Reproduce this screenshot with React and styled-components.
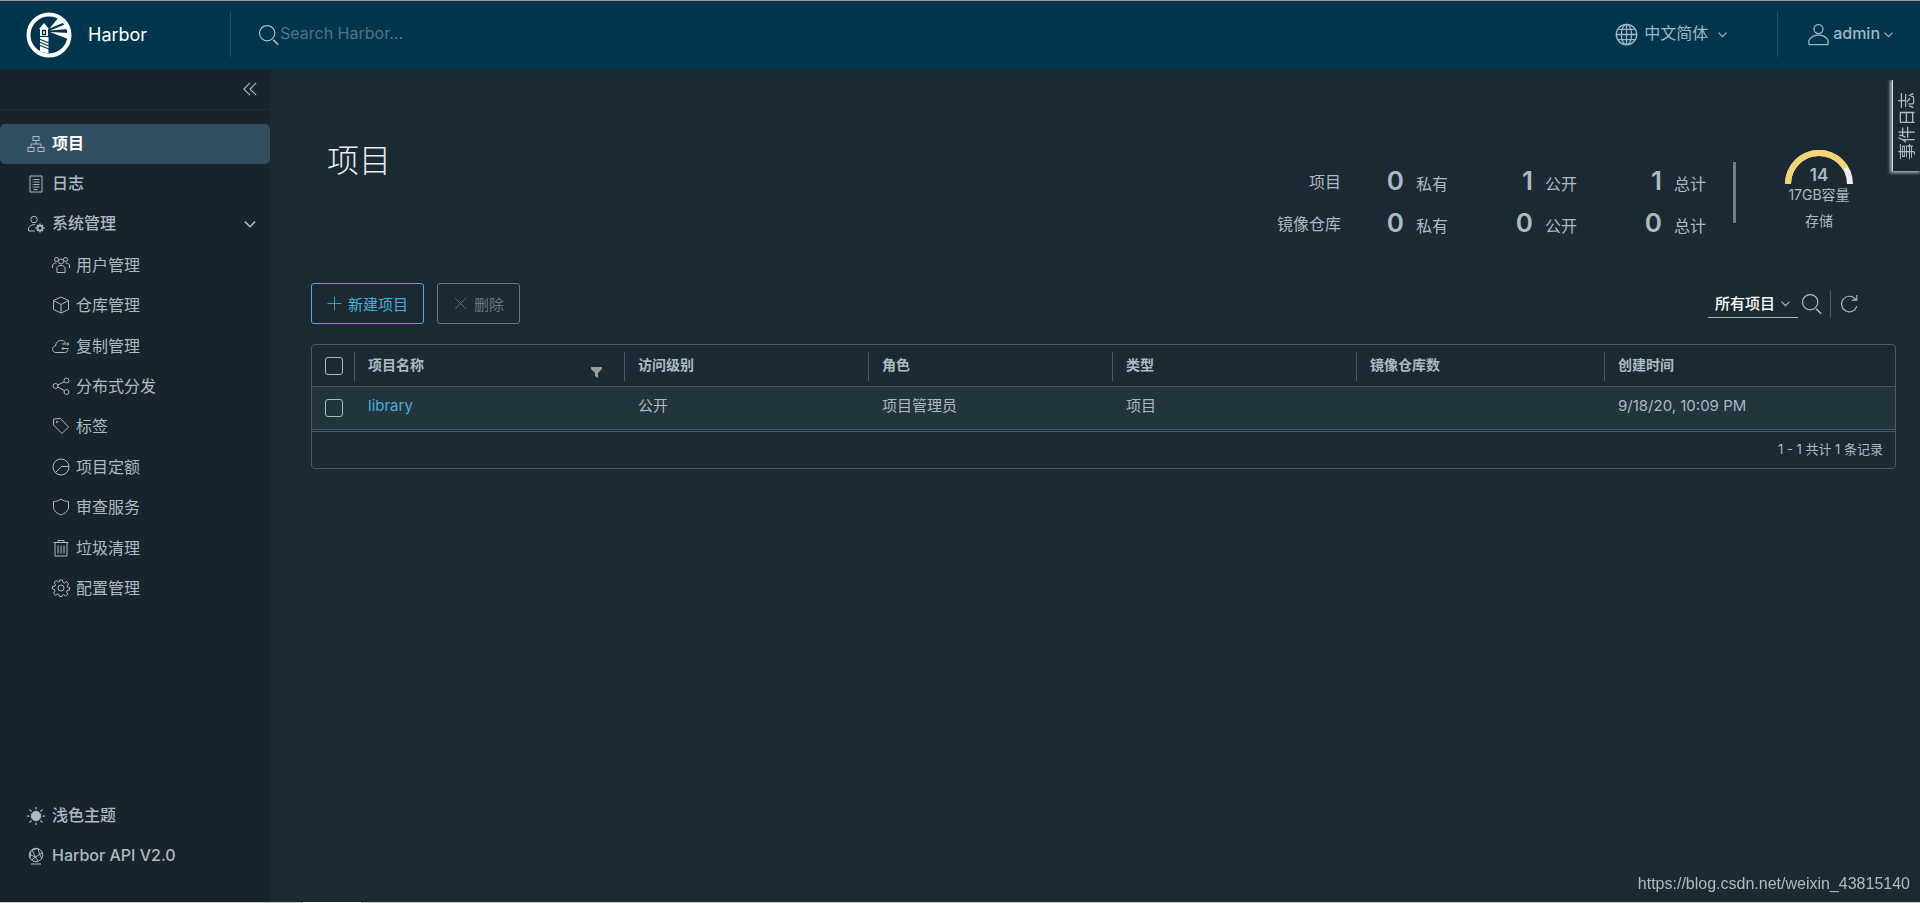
import React from "react";
import styled, { createGlobalStyle } from "styled-components";

const Global = createGlobalStyle`
  *, *::before, *::after { box-sizing: border-box; }
  body { margin: 0; background: #1b2a32; }
  body, button, input, select {
    font-family: Inter, "Noto Sans CJK SC", sans-serif;
  }
  button { cursor: pointer; }
  a { color: inherit; text-decoration: none; }
`;

const Page = styled.div`
  display: flex;
  flex-direction: column;
  min-height: 100vh;
  color: #acbac3;
  font-size: 16px;
  line-height: 24px;
  border-top: 1px solid #9a9c9c;
`;
const Header = styled.header`
  display: flex;
  align-items: center;
  height: 68px;
  padding-bottom: 1px;
  background: #00364d;
`;
const Brand = styled.a`
  display: flex;
  align-items: center;
  gap: 16px;
  width: 230px;
  padding-left: 26px;
  color: #fff;
  font-size: 18px;
`;
const Rule = styled.span`
  width: 1px;
  height: 45px;
  background: #24536a;
`;
const FilterRule = styled(Rule)`
  height: 28px;
  margin: 0 8px 0 7px;
  background: #495a67;
`;
const Search = styled.label`
  display: flex;
  align-items: center;
  flex: 1;
  padding-left: 27px;
`;
const SearchInput = styled.input`
  flex: 1;
  border: 0;
  outline: 0;
  padding: 0 0 3px;
  background: transparent;
  color: #fff;
  font-size: 16px;
  &::placeholder { color: #527385; opacity: 1; }
`;
const HeaderButton = styled.button`
  display: flex;
  align-items: center;
  gap: ${(p) => p.$gap}px;
  border: 0;
  padding: ${(p) => p.$pad};
  background: transparent;
  color: #a3b6c0;
  font-size: 16px;
  font-weight: ${(p) => p.$weight || 400};
  line-height: 24px;
`;
const ButtonText = styled.span`
  padding: 0 ${(p) => p.$after || 0}px 3px 0;
`;
const Body = styled.div`
  display: flex;
  flex: 1;
`;
const Side = styled.nav`
  display: flex;
  flex-direction: column;
  width: 270px;
  flex-shrink: 0;
  padding-bottom: 26px;
  background: #17242b;
`;
const Collapse = styled.button`
  display: flex;
  justify-content: flex-end;
  align-items: center;
  height: 41px;
  padding: 0 12px 0 0;
  border: 0;
  border-bottom: 1px solid #202e36;
  background: transparent;
  color: #acbac3;
  margin-bottom: 14px;
`;
const NavLink = styled.a`
  display: flex;
  align-items: center;
  gap: 7px;
  height: 40px;
  padding: 0 13px 0 27px;
  border-radius: 5px;
  font-weight: ${(p) => (p.$active ? 700 : 500)};
  color: ${(p) => (p.$active ? "#fff" : "#acbac3")};
  background: ${(p) => (p.$active ? "#324f62" : "transparent")};
  svg { color: #acbac3; }
`;
const NavText = styled.span`
  flex: 1;
  padding-bottom: 2px;
`;
const SubNav = styled.div`
  display: grid;
  height: 364px;
`;
const SubLink = styled.a`
  display: flex;
  align-items: center;
  gap: 6px;
  padding: 1px 0 0 52px;
`;
const SideBottom = styled.div`
  margin-top: auto;
`;
const Main = styled.main`
  flex: 1;
  min-width: 0;
  padding: 54px 24px 0 41px;
`;
const TitleRow = styled.div`
  display: flex;
  justify-content: space-between;
  padding: 0 42px 0 16px;
  height: 160px;
`;
const Title = styled.h1`
  margin: 14px 0 0;
  color: #e9edef;
  font-size: 32px;
  font-weight: 300;
  line-height: 48px;
`;
const Summary = styled.div`
  display: flex;
  align-items: flex-start;
`;
const Stats = styled.dl`
  display: grid;
  grid-template-columns: auto 107px 129px 129px;
  grid-auto-rows: 42px;
  margin: 38px 27px 0 0;
  text-align: right;
  dt { line-height: 42px; }
  dd { margin: 0; line-height: 40px; }
`;
const Count = styled.strong`
  margin-right: 12px;
  color: #acbac3;
  font-size: 26px;
  font-weight: 600;
`;
const StatsRule = styled.span`
  width: 3px;
  height: 61px;
  margin: 39px 48px 0 0;
  background: #747c80;
`;
const Storage = styled.div`
  display: flex;
  flex-direction: column;
  align-items: center;
  width: 70px;
  margin-top: 27px;
  font-size: 14px;
  line-height: 20px;
  white-space: nowrap;
  gap: 6px;
`;
const Gauge = styled.div`
  display: grid;
  justify-items: center;
  height: 29px;
  svg, b { grid-area: 1 / 1; }
  b { align-self: end; font-size: 17px; font-weight: 600; line-height: 18px; }
`;
const Toolbar = styled.div`
  display: flex;
  align-items: center;
  gap: 13px;
  height: 41px;
  margin-bottom: 20px;
`;
const Action = styled.button`
  display: flex;
  align-items: center;
  gap: 6px;
  height: 41px;
  padding: 0 15px;
  border: 1px solid ${(p) => (p.disabled ? "#6b777d" : "#49afd9")};
  border-radius: 3px;
  background: transparent;
  color: ${(p) => (p.disabled ? "#6b777d" : "#49afd9")};
  font-size: 15px;
`;
const Filters = styled.div`
  display: flex;
  align-items: center;
  margin-left: auto;
  padding-right: 37px;
`;
const SelectBox = styled.label`
  display: flex;
  align-items: center;
  width: 90px;
  height: 28px;
  margin-right: 3px;
  padding: 0 7px;
  border-bottom: 1px solid #acbac3;
`;
const Select = styled.select`
  flex: 1;
  min-width: 0;
  appearance: none;
  border: 0;
  padding: 0;
  outline: 0;
  background: transparent;
  color: #fff;
  font-size: 15px;
  font-weight: 500;
`;
const IconButton = styled.button`
  display: flex;
  padding: 0;
  border: 0;
  background: transparent;
  color: #acbac3;
`;
const Grid = styled.div`
  border: 1px solid #495a67;
  border-radius: 4px;
`;
const Table = styled.table`
  width: 100%;
  table-layout: fixed;
  border-collapse: collapse;
  text-align: left;
`;
const Th = styled.th`
  padding: 7px 0 5px;
  height: 41px;
  font-size: 14px;
  font-weight: 600;
  line-height: 20px;
`;
const ThInner = styled.div`
  display: flex;
  align-items: center;
  justify-content: space-between;
  height: 29px;
  padding: 0 22px 3px 13px;
  border-left: 1px solid #495a67;
`;
const FilterGlyph = styled.svg`
  align-self: flex-end;
`;
const Td = styled.td`
  height: 42px;
  padding: 0 0 3px ${(p) => (p.$check ? 13 : 14)}px;
  border-top: 1px solid #495a67;
  background: #22343c;
  font-size: 15px;
`;
const Check = styled.input`
  appearance: none;
  display: block;
  width: 18px;
  height: 18px;
  margin: 3px 0 0;
  border: 1px solid #acbac3;
  border-radius: 3px;
`;
const HeadCheck = styled(Check)`
  margin: 0 0 2px 13px;
`;
const ProjectLink = styled.a`
  color: #49afd9;
`;
const GridFooter = styled.div`
  height: 39px;
  padding-right: 12px;
  border-top: 3px double #495a67;
  font-size: 13px;
  line-height: 34px;
  text-align: right;
`;
const EventTab = styled.button`
  position: fixed;
  top: 80px;
  right: 0;
  display: flex;
  align-items: center;
  justify-content: center;
  width: 28px;
  height: 91px;
  padding: 0 2px 0 0;
  border: 0;
  border-left: 1px solid #d5d9db;
  background: #1b2a32;
  color: #acbac3;
  font-size: 17px;
  box-shadow: -1px 1px 3px 1px #a5adb0;
  clip-path: inset(0 0 -6px -6px);
`;
const Vertical = styled.span`
  writing-mode: vertical-rl;
  text-orientation: sideways;
  transform: rotate(180deg);
`;
const Watermark = styled.div`
  position: fixed;
  right: 10px;
  bottom: 7px;
  color: #b4b9bc;
  font-family: "Liberation Sans", sans-serif;
  font-size: 16px;
`;
const BottomEdge = styled.div`
  display: flex;
  height: 1px;
  background: #c4c4c4;
  &::after { content: ""; width: 58px; margin-left: 303px; background: #fff; }
`;

const Icon = ({ size = 18, w = 2, children }) => (
  <svg width={size} height={size} viewBox="0 0 36 36" fill="none" stroke="currentColor" strokeWidth={w} aria-hidden="true">
    {children}
  </svg>
);
const Caret = ({ size = 11, w = 4 }) => (
  <Icon size={size} w={w}><path d="M5 12l13 13 13-13" /></Icon>
);
const Loupe = ({ size = 22 }) => (
  <Icon size={size}><circle cx="15" cy="15" r="12.5" /><path d="M25 26l8 8" strokeWidth="2.6" /></Icon>
);
const Logo = () => (
  <svg width="46" height="46" viewBox="0 0 46 46" aria-hidden="true">
    <circle cx="23" cy="23" r="20.5" fill="none" stroke="#fff" strokeWidth="4" />
    <path d="M13 17l5-6 5 6zM14 17h8v7h-8zM14 25h8.500v16.500l-8.500-2z" fill="#fff" />
    <path d="M16.500 18.500h3v4h-3zM13 27l10 4M13 30l10 4M13 33l10 4" fill="none" stroke="#00364d" strokeWidth="1.300" />
    <path d="M23.500 16.500L33 5l6 5zM24 18.500L40 12l2 5zM24 20l19 1-1 6z" fill="#fff" />
  </svg>
);

const icons = {
  projects: <><rect x="12" y="3" width="12" height="8" /><rect x="2" y="25" width="12" height="8" /><rect x="22" y="25" width="12" height="8" /><path d="M18 11v7M8 25v-7h20v7" /></>,
  logs: <path d="M6 2h24v32H6zM13 9h12M13 14h12M13 19h12M13 24h12M13 29h8M10 9h1M10 14h1M10 19h1M10 24h1" />,
  admin: <><circle cx="14" cy="9" r="6.500" /><path d="M16 32H3v-6c3-5 7-7 13-7" /><circle cx="26" cy="26" r="5" strokeWidth="3.500" /><path d="M26 17v4M26 31v4M17 26h4M31 26h4M20 20l3 3M29 29l3 3M32 20l-3 3M23 29l-3 3" strokeWidth="3" /></>,
  users: <><circle cx="18" cy="11" r="5" /><circle cx="9" cy="7" r="4" /><circle cx="27" cy="7" r="4" /><path d="M10 33V23c2-3 4-4 8-4s6 1 8 4v10zM1 24v-6c2-3 4-4 8-4M35 24v-6c-2-3-4-4-8-4" /></>,
  box: <path d="M18 2l15 7v18l-15 7-15-7V9zM3 9l15 8 15-8M18 17v17" />,
  cloud: <path d="M32 25c0 4-3 6-7 6H8c-9 0-9-12-1-13 1-13 17-15 20-5M20 14h14M31 11l3 3-3 3M33 23H20M23 20l-3 3 3 3" />,
  share: <><circle cx="7" cy="18" r="5" /><circle cx="29" cy="7" r="5" /><circle cx="29" cy="30" r="5" /><path d="M11 16l13-6M11 20l14 7" /></>,
  tag: <><path d="M3 4l14-1 16 17-13 13L3 16z" /><circle cx="10" cy="10" r="1.500" /></>,
  quota: <><circle cx="18" cy="18" r="16" /><path d="M34 17H19L7 29" /></>,
  shield: <path d="M18 2c4 3 9 5 15 5v11c0 8-7 13-15 16C10 31 3 26 3 18V7c6 0 11-2 15-5z" />,
  trash: <path d="M6 8v26h24V8M12 13v16M18 13v16M24 13v16M3 7h30M12 7V3h12v4" />,
  gear: <><circle cx="18" cy="18" r="6" /><path d="M15 2h6l1 5 3 1 4-3 4 5-3 4 1 2 4 1v5l-5 1-1 3 3 4-5 4-4-3-2 1-1 3h-5l-1-4-3-1-4 3-4-5 3-4-1-3-4-1v-5l5-1 1-3-3-4 5-4 4 3 2-1z" /></>,
  sun: <><circle cx="18" cy="18" r="9.500" fill="currentColor" /><path d="M18 0v5M18 31v5M0 18h5M31 18h5M5 5l4 4M27 27l4 4M31 5l-4 4M9 27l-4 4" strokeWidth="2.500" /></>,
  api: <><circle cx="18" cy="16" r="13.500" /><path d="M8 34h20M5 15l12 5 14-9M17 20l5 8M17 20L9 26M10 6l7 14M22 3l3 11 5 10M10 6l12-3M8 8L6 22" /></>,
  globe: <><circle cx="18" cy="18" r="16" /><ellipse cx="18" cy="18" rx="8" ry="16" /><path d="M18 2v32M2 18h32M5 10h26M5 26h26" /></>,
  user: <><circle cx="18" cy="9.500" r="7" /><path d="M3 33v-6c3-5 8-8 15-8s12 3 15 8v6q0 1-1 1H4q-1 0-1-1z" /></>,
};

const subItems = [
  ["users", "用户管理"], ["box", "仓库管理"], ["cloud", "复制管理"],
  ["share", "分布式分发"], ["tag", "标签"], ["quota", "项目定额"],
  ["shield", "审查服务"], ["trash", "垃圾清理"], ["gear", "配置管理"],
];
const columns = ["访问级别", "角色", "类型", "镜像仓库数", "创建时间"];
const stats = [
  ["项目", [[0, "私有"], [1, "公开"], [1, "总计"]]],
  ["镜像仓库", [[0, "私有"], [0, "公开"], [0, "总计"]]],
];

export default function App() {
  return (
    <Page>
      <Global />
      <Header>
        <Brand href="#"><Logo />Harbor</Brand>
        <Rule />
        <Search>
          <Loupe />
          <SearchInput placeholder="Search Harbor..." aria-label="Search Harbor" />
        </Search>
        <HeaderButton $gap={6} $pad="0 49px 0 0">
          <Icon size={23}>{icons.globe}</Icon>
          <ButtonText $after={3}>中文简体</ButtonText>
          <Caret />
        </HeaderButton>
        <Rule />
        <HeaderButton $gap={3} $pad="0 26px 0 29px" $weight={500}>
          <Icon size={23}>{icons.user}</Icon>
          <ButtonText>admin</ButtonText>
          <Caret />
        </HeaderButton>
      </Header>
      <Body>
        <Side>
          <Collapse aria-label="收起">
            <Icon size={16} w={2.5}><path d="M18 4L4 18l14 14M32 4L18 18l14 14" /></Icon>
          </Collapse>
          <NavLink href="#" $active><Icon>{icons.projects}</Icon><NavText>项目</NavText></NavLink>
          <NavLink href="#"><Icon>{icons.logs}</Icon><NavText>日志</NavText></NavLink>
          <NavLink href="#"><Icon>{icons.admin}</Icon><NavText>系统管理</NavText><Caret size={14} /></NavLink>
          <SubNav>
            {subItems.map(([icon, label]) => (
              <SubLink href="#" key={label}><Icon>{icons[icon]}</Icon>{label}</SubLink>
            ))}
          </SubNav>
          <SideBottom>
            <NavLink href="#"><Icon>{icons.sun}</Icon><NavText>浅色主题</NavText></NavLink>
            <NavLink href="#"><Icon>{icons.api}</Icon><NavText>Harbor API V2.0</NavText></NavLink>
          </SideBottom>
        </Side>
        <Main>
          <TitleRow>
            <Title>项目</Title>
            <Summary>
              <Stats>
                {stats.map(([name, cells]) => (
                  <React.Fragment key={name}>
                    <dt>{name}</dt>
                    {cells.map(([n, unit]) => (
                      <dd key={unit}><Count>{n}</Count>{unit}</dd>
                    ))}
                  </React.Fragment>
                ))}
              </Stats>
              <StatsRule />
              <Storage>
                <Gauge>
                  <svg width="70" height="34" viewBox="0 0 70 34" fill="none" strokeWidth="6" aria-hidden="true">
                    <path d="M4 34a31 31 0 0 1 62 0" stroke="#eee" />
                    <path d="M4 34a31 31 0 0 1 57.500-16" stroke="#f5d572" />
                  </svg>
                  <b>14</b>
                </Gauge>
                <span>17GB容量</span>
                <span>存储</span>
              </Storage>
            </Summary>
          </TitleRow>
          <Toolbar>
            <Action><Icon size={15}><path d="M18 1v34M1 18h34" /></Icon>新建项目</Action>
            <Action disabled><Icon size={15}><path d="M5 5l26 26M31 5L5 31" /></Icon>删除</Action>
            <Filters>
              <SelectBox>
                <Select aria-label="项目范围"><option>所有项目</option></Select>
                <Caret />
              </SelectBox>
              <IconButton aria-label="搜索"><Loupe /></IconButton>
              <FilterRule />
              <IconButton aria-label="刷新">
                <Icon size={20}><path d="M30 10A14 14 0 1 0 32 22M32 2v9h-9" /></Icon>
              </IconButton>
            </Filters>
          </Toolbar>
          <Grid>
            <Table>
              <colgroup>
                <col width="42" /><col width="270" /><col width="244" /><col width="244" />
                <col width="244" /><col width="248" /><col />
              </colgroup>
              <thead>
                <tr>
                  <Th><HeadCheck type="checkbox" aria-label="全选" /></Th>
                  <Th>
                    <ThInner>
                      项目名称
                      <FilterGlyph width="11" height="11" viewBox="0 0 11 11" fill="#9a9a9a" aria-hidden="true"><path d="M0 0h11v2L7 6v5L4 9V6L0 2z" /></FilterGlyph>
                    </ThInner>
                  </Th>
                  {columns.map((c) => <Th key={c}><ThInner>{c}</ThInner></Th>)}
                </tr>
              </thead>
              <tbody>
                <tr>
                  <Td $check><Check type="checkbox" aria-label="library" /></Td>
                  <Td><ProjectLink href="#">library</ProjectLink></Td>
                  <Td>公开</Td>
                  <Td>项目管理员</Td>
                  <Td>项目</Td>
                  <Td />
                  <Td>9/18/20, 10:09 PM</Td>
                </tr>
              </tbody>
            </Table>
            <GridFooter>1 - 1 共计 1 条记录</GridFooter>
          </Grid>
        </Main>
      </Body>
      <BottomEdge />
      <EventTab><Vertical>事件日志</Vertical></EventTab>
      <Watermark>https://blog.csdn.net/weixin_43815140</Watermark>
    </Page>
  );
}
